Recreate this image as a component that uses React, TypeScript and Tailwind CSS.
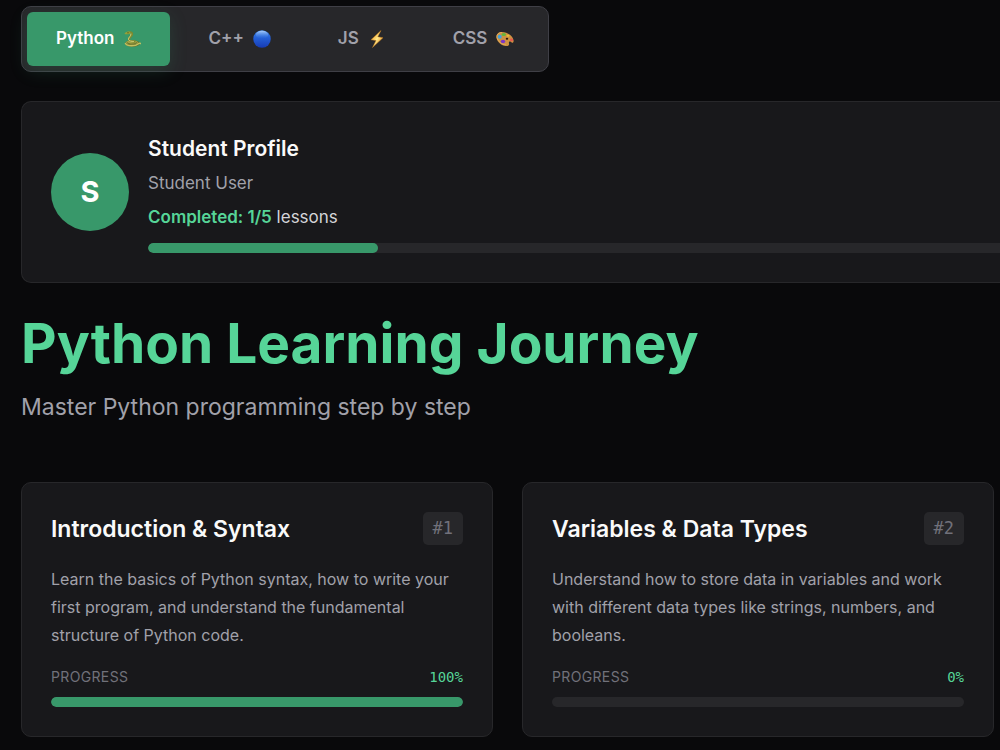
import { useState } from "react";
import type { ReactNode } from "react";
import clsx from "clsx";

// Icons
const SnakeIcon = () => (
  <svg viewBox="0 0 36 36" className="size-[18px]" aria-hidden="true">
    <ellipse cx="19" cy="27" rx="15" ry="6.5" fill="#66702a" />
    <ellipse cx="18" cy="25" rx="12" ry="4.5" fill="#a3a648" />
    <path
      d="M5 27c3 6 20 6 25 1 1-1 3-2 5-1"
      fill="none"
      stroke="#c3bf5e"
      strokeWidth="3"
      strokeLinecap="round"
    />
    <path
      d="M8 25c4 4 15 4 20 0"
      fill="none"
      stroke="#4f5a1e"
      strokeWidth="1.4"
    />
    <path
      d="M10 6c5-3 9-1 8 3-1 4-7 6-6 10 1 3 6 4 11 4"
      fill="none"
      stroke="#7c8a30"
      strokeWidth="4.5"
      strokeLinecap="round"
    />
    <path
      d="M16 8c1 4-6 7-5 11 1 3 6 4 10 4"
      fill="none"
      stroke="#dcd37c"
      strokeWidth="1.8"
      strokeLinecap="round"
    />
    <path d="M3 8c1-4 7-6 11-4 2 2 0 4-4 4.500-3 0-5 .5-7-.5z" fill="#94a03a" />
    <circle cx="10" cy="5.500" r="1" fill="#222b0d" />
  </svg>
);

const BlueCircleIcon = () => (
  <svg viewBox="0 0 36 36" className="size-[18px]" aria-hidden="true">
    <defs>
      <linearGradient id="ball" x1="0" y1="0" x2="0" y2="1">
        <stop offset="0" stopColor="#3f86e8" />
        <stop offset="0.45" stopColor="#245fd6" />
        <stop offset="1" stopColor="#173bb4" />
      </linearGradient>
      <linearGradient id="shine" x1="0" y1="0" x2="0" y2="1">
        <stop offset="0" stopColor="#a9cdfb" />
        <stop offset="1" stopColor="#3474df" stopOpacity="0" />
      </linearGradient>
    </defs>
    <circle cx="18" cy="18" r="17.5" fill="url(#ball)" />
    <ellipse cx="18" cy="9.5" rx="12.5" ry="8" fill="url(#shine)" />
  </svg>
);

const BoltIcon = () => (
  <svg viewBox="0 0 36 36" className="size-[18px]" aria-hidden="true">
    <defs>
      <linearGradient id="bolt" x1="0" y1="0" x2="1" y2="1">
        <stop offset="0.2" stopColor="#f2a52c" />
        <stop offset="0.5" stopColor="#ffe98a" />
        <stop offset="0.8" stopColor="#e9952a" />
      </linearGradient>
    </defs>
    <path
      d="M26 1 6 19.500l10 1.500L9 35l21-19.500-10.500-2z"
      fill="url(#bolt)"
      stroke="#b8741c"
      strokeWidth="1"
      strokeLinejoin="round"
    />
  </svg>
);

const PaletteIcon = () => (
  <svg viewBox="0 0 36 36" className="size-[18px]" aria-hidden="true">
    <path
      d="M12 4C4 4 0 9 1 16c2 9 11 16 20 16 4 0 6-2 5-5-1-4 1-5 4-3 3 3 6 1 5-4C33 11 22 4 12 4z"
      fill="#cf9242"
    />
    <path
      d="M12 5C5 5 1 9 2 15c2 8 10 14 18 15"
      fill="none"
      stroke="#e6b468"
      strokeWidth="1.500"
    />
    <ellipse cx="15.500" cy="9" rx="4.500" ry="3" fill="#63b83b" />
    <ellipse cx="7.500" cy="13.500" rx="4" ry="4" fill="#3fa2e0" />
    <ellipse cx="14" cy="23" rx="4.500" ry="3.500" fill="#7c35c4" />
    <ellipse cx="31" cy="20" rx="3" ry="2.800" fill="#e8574f" />
    <ellipse cx="22" cy="17.500" rx="2.500" ry="2" fill="#2b1a10" />
    <ellipse cx="24" cy="11.500" rx="3" ry="2" fill="#e8c132" />
  </svg>
);

// Data
const tabs: { name: string; icon: ReactNode }[] = [
  { name: "Python", icon: <SnakeIcon /> },
  { name: "C++", icon: <BlueCircleIcon /> },
  { name: "JS", icon: <BoltIcon /> },
  { name: "CSS", icon: <PaletteIcon /> },
];

const lessons = [
  {
    id: 1,
    title: "Introduction & Syntax",
    description:
      "Learn the basics of Python syntax, how to write your first program, and understand the fundamental structure of Python code.",
    progress: 100,
  },
  {
    id: 2,
    title: "Variables & Data Types",
    description:
      "Understand how to store data in variables and work with different data types like strings, numbers, and booleans.",
    progress: 0,
  },
];

const ProgressBar = ({
  value,
  label,
  className,
}: {
  value: number;
  label: string;
  className?: string;
}) => (
  <div
    role="progressbar"
    aria-label={label}
    aria-valuenow={value}
    className={clsx("h-2.5 overflow-hidden bg-[#27272a]", className)}
  >
    <div
      className="h-full rounded-full bg-[#38986a]"
      style={{ width: `${value}%` }}
    />
  </div>
);

const LessonCard = ({ lesson }: { lesson: (typeof lessons)[number] }) => (
  <article className="rounded-[10px] border border-[#27272a] bg-[#18181b] p-[29px]">
    <div className="flex items-center justify-between">
      <h2 className="text-[23px] leading-8 font-semibold text-[#fafafa]">
        {lesson.title}
      </h2>
      <span className="rounded-[5px] bg-[#27272a] px-2.5 font-[DejaVu_Sans_Mono,monospace] text-[17px] leading-[33px] text-[#71717a]">
        #{lesson.id}
      </span>
    </div>
    <p className="mt-5 text-base leading-7 text-[#a1a1aa]">
      {lesson.description}
    </p>
    <div className="mt-[18px] flex items-center justify-between text-sm">
      <span className="tracking-wide text-[#71717a] uppercase">Progress</span>
      <span className="font-[DejaVu_Sans_Mono,monospace] text-[#56d598]">
        {lesson.progress}%
      </span>
    </div>
    <ProgressBar
      value={lesson.progress}
      label={lesson.title}
      className="mt-2.5 rounded-full"
    />
  </article>
);

export default function App() {
  const [activeTab, setActiveTab] = useState("Python");

  return (
    <main className="min-h-screen bg-[#09090b] pt-1.5 pr-1.5 pb-3 pl-[21px] font-[Inter,sans-serif]">
      {/* Language tabs */}
      <nav className="flex w-fit gap-[9px] rounded-[10px] border border-[#3f3f46] bg-[#27272a] p-[5px]">
        {tabs.map((tab) => (
          <button
            key={tab.name}
            onClick={() => setActiveTab(tab.name)}
            className={clsx(
              "flex h-[54px] items-center gap-[9px] rounded-md px-[29px] text-[17px] font-semibold",
              activeTab === tab.name
                ? "bg-[#38986a] text-white shadow-[0_5px_18px_rgba(56,152,106,0.2)]"
                : "text-[#a1a1aa]"
            )}
          >
            {tab.name}
            {tab.icon}
          </button>
        ))}
      </nav>

      {/* Profile */}
      <section className="mt-[29px] -mr-1.5 flex items-center gap-[19px] rounded-l-[10px] border border-r-0 border-[#27272a] bg-[#18181b] py-[29px] pl-[29px]">
        <div className="flex size-[78px] shrink-0 items-center justify-center rounded-full bg-[#38986a] text-[29px] font-bold text-white">
          S
        </div>
        <div className="grow">
          <h2 className="text-[21px] leading-9 font-semibold text-[#fafafa]">
            Student Profile
          </h2>
          <p className="text-[17px] leading-8 text-[#a1a1aa]">Student User</p>
          <p className="mt-0.5 text-[17px] leading-8 text-[#d4d4d8]">
            <span className="font-semibold text-[#56d598]">Completed: 1/5</span>{" "}
            lessons
          </p>
          <ProgressBar
            value={27}
            label="Completed lessons"
            className="mt-2.5 rounded-l-full"
          />
        </div>
      </section>

      {/* Heading */}
      <header className="mt-7">
        <h1 className="text-[55px] leading-[64px] font-bold text-[#56d598]">
          Python Learning Journey
        </h1>
        <p className="mt-3.5 text-[23px] leading-9 text-[#a1a1aa]">
          Master Python programming step by step
        </p>
      </header>

      {/* Lessons */}
      <div className="mt-[57px] grid grid-cols-2 gap-[29px]">
        {lessons.map((lesson) => (
          <LessonCard key={lesson.id} lesson={lesson} />
        ))}
      </div>
    </main>
  );
}
